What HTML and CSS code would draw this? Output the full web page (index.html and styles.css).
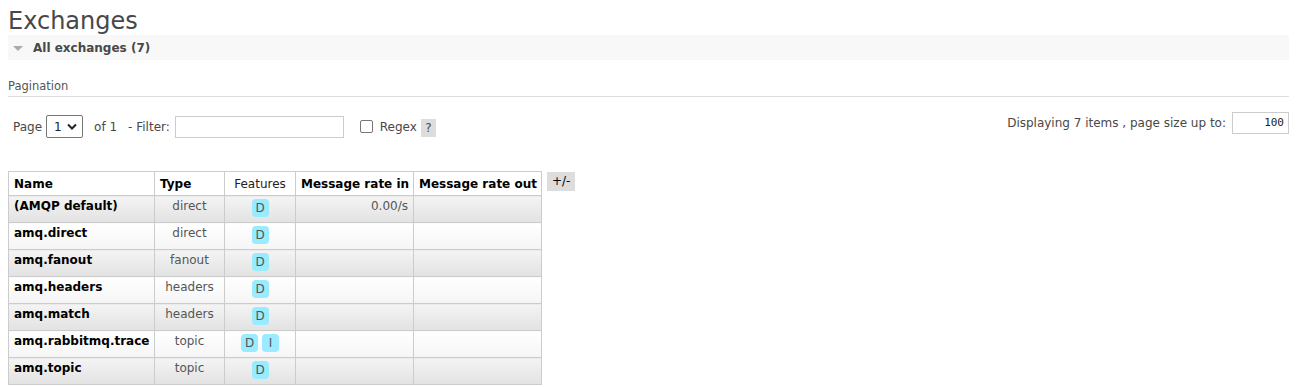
FILE: index.html
```html
<!DOCTYPE html>
<html>
<head>
<meta charset="utf-8">
<link rel="stylesheet" href="styles.css">
</head>
<body>
<div class="main">
  <h1 class="title">Exchanges</h1>
  <div class="section">
    <div class="section-head"><span class="tri"></span>All exchanges (7)</div>
  </div>
  <div class="pag-title">Pagination</div>
  <div class="pag-row">
    <div class="pag-left">
      <span>Page</span>
      <span class="select">1<svg width="10" height="7" viewBox="0 0 10 7"><path d="M1 1.5 L5 5.5 L9 1.5" fill="none" stroke="#222" stroke-width="2"/></svg></span>
      <span class="of">of 1</span>
      <span class="filter">- Filter:</span>
      <span class="input filter-input"></span>
      <span class="check"></span>
      <span class="regex">Regex</span>
      <span class="help">?</span>
    </div>
    <div class="pag-right">
      <span>Displaying 7 items , page size up to:</span>
      <span class="input size-input">100</span>
    </div>
  </div>
  <div class="table-wrap">
    <table class="list">
      <colgroup>
        <col class="w-name"><col class="w-type"><col class="w-feat"><col class="w-in"><col class="w-out">
      </colgroup>
      <thead>
        <tr>
          <th>Name</th>
          <th>Type</th>
          <th class="plain">Features</th>
          <th>Message rate in</th>
          <th>Message rate out</th>
        </tr>
      </thead>
      <tbody>
        <tr class="alt1"><td class="name">(AMQP default)</td><td class="type">direct</td><td class="feat"><span class="badge">D</span></td><td class="rate">0.00/s</td><td></td></tr>
        <tr class="alt2"><td class="name">amq.direct</td><td class="type">direct</td><td class="feat"><span class="badge">D</span></td><td></td><td></td></tr>
        <tr class="alt1"><td class="name">amq.fanout</td><td class="type">fanout</td><td class="feat"><span class="badge">D</span></td><td></td><td></td></tr>
        <tr class="alt2"><td class="name">amq.headers</td><td class="type">headers</td><td class="feat"><span class="badge">D</span></td><td></td><td></td></tr>
        <tr class="alt1"><td class="name">amq.match</td><td class="type">headers</td><td class="feat"><span class="badge">D</span></td><td></td><td></td></tr>
        <tr class="alt2"><td class="name">amq.rabbitmq.trace</td><td class="type">topic</td><td class="feat"><span class="badge">D</span> <span class="badge">I</span></td><td></td><td></td></tr>
        <tr class="alt1"><td class="name">amq.topic</td><td class="type">topic</td><td class="feat"><span class="badge">D</span></td><td></td><td></td></tr>
      </tbody>
    </table>
    <span class="plusminus">+/-</span>
  </div>
</div>
</body>
</html>
```
FILE: styles.css
```css
html, body {
  margin: 0;
  padding: 0;
  background: #fff;
}
body {
  font-family: "DejaVu Sans", Verdana, sans-serif;
  font-size: 12px;
  color: #484848;
}
.main {
  padding: 8px 19px 0 8px;
}
.title {
  margin: 0;
  font-size: 24px;
  font-weight: normal;
  color: #484848;
  line-height: 27px;
  height: 27px;
}
.section-head {
  background: #f8f8f8;
  height: 25px;
  display: flex;
  align-items: center;
  font-weight: bold;
  font-size: 12px;
  color: #484848;
}
.tri {
  width: 0;
  height: 0;
  border-left: 5px solid transparent;
  border-right: 5px solid transparent;
  border-top: 5px solid #aaa;
  margin: 1px 10px 0 5px;
}
.pag-title {
  margin-top: 20px;
  padding-bottom: 3px;
  border-bottom: 1px solid #ddd;
  font-size: 11.5px;
  color: #555;
  line-height: 13px;
}
.pag-row {
  display: flex;
  justify-content: space-between;
  align-items: flex-start;
  margin-top: 15px;
}
.pag-left {
  display: flex;
  align-items: center;
  padding-left: 5px;
  margin-top: 3px;
}
.select {
  display: inline-flex;
  align-items: center;
  justify-content: space-between;
  box-sizing: border-box;
  width: 37px;
  height: 23px;
  border: 1px solid #767676;
  border-radius: 2px;
  margin-left: 4px;
  padding: 0 5px 0 7px;
  color: #222;
  font-size: 12px;
}
.of {
  margin-left: 11px;
}
.filter {
  margin-left: 11px;
}
.input {
  display: inline-block;
  box-sizing: border-box;
  border: 1px solid #ccc;
  height: 22px;
  background: #fff;
}
.filter-input {
  width: 169px;
  margin-left: 5px;
}
.check {
  display: inline-block;
  box-sizing: border-box;
  width: 13px;
  height: 13px;
  border: 1px solid #767676;
  border-radius: 2px;
  margin-left: 16px;
}
.regex {
  margin-left: 7px;
}
.help {
  display: inline-block;
  background: #ddd;
  width: 15px;
  height: 18px;
  line-height: 18px;
  text-align: center;
  margin-left: 4px;
  margin-top: 3px;
}
.pag-right {
  display: flex;
  align-items: center;
  gap: 6px;
}
.size-input {
  width: 57px;
  height: 22px;
  line-height: 20px;
  text-align: right;
  padding-right: 4px;
  font-family: "DejaVu Sans Mono", monospace;
  font-size: 11px;
  color: #222;
}
.table-wrap {
  display: flex;
  align-items: flex-start;
  margin-top: 33px;
  gap: 5px;
}
.list {
  border-collapse: collapse;
  border: 1px solid #ccc;
  table-layout: fixed;
  width: 533px;
}
.w-name { width: 146px; }
.w-type { width: 70px; }
.w-feat { width: 71px; }
.w-in { width: 118px; }
.w-out { width: 128px; }
.list th, .list td {
  border: 1px solid #ccc;
  padding: 0 5px;
  white-space: nowrap;
  box-sizing: border-box;
}
.list th {
  height: 24px;
  text-align: left;
  font-weight: bold;
  color: #000;
  background: #fff;
  vertical-align: middle;
  padding-top: 1px;
}
.list th.plain {
  font-weight: normal;
  color: #222;
  text-align: center;
}
.list td {
  height: 27px;
  vertical-align: top;
  padding-top: 3px;
}
.list tr.alt1 td {
  background: linear-gradient(#f4f4f4, #e2e2e2);
}
.list tr.alt2 td {
  background: linear-gradient(#ffffff, #f5f5f5);
}
.list td.name {
  font-weight: bold;
  color: #000;
}
.list td.type {
  text-align: center;
  color: #555;
}
.list td.feat {
  text-align: center;
  padding-top: 2px;
}
.list td.rate {
  text-align: right;
  color: #555;
}
.badge {
  display: inline-block;
  background: #99ebff;
  border-radius: 4px;
  padding: 0 3px;
  min-width: 11px;
  height: 18px;
  line-height: 19px;
  color: #555;
  text-align: center;
  margin-top: 1px;
}
.plusminus {
  display: inline-block;
  background: #ddd;
  color: #000;
  padding: 0 5px;
  height: 19px;
  line-height: 19px;
  margin-top: 1px;
}
```
